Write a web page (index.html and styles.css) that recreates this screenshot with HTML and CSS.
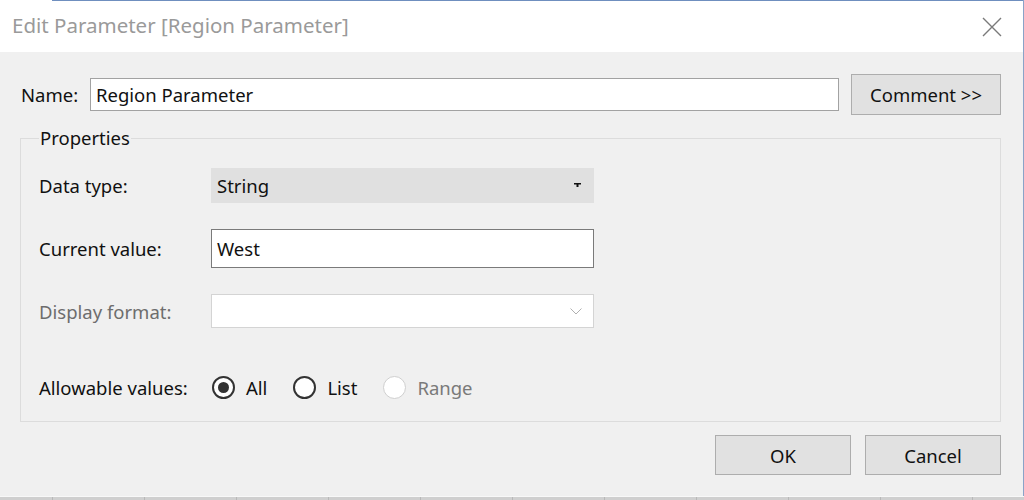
FILE: index.html
```html
<!DOCTYPE html>
<html>
<head>
<meta charset="utf-8">
<link rel="stylesheet" href="styles.css">
</head>
<body>
<div class="window">
  <div class="topline"></div>
  <div class="titlebar">
    <span class="title">Edit Parameter [Region Parameter]</span>
    <svg class="close" width="20" height="20" viewBox="0 0 20 20"><path d="M1 1 L19 19 M19 1 L1 19" stroke="#7a7a7a" stroke-width="1.4" fill="none"/></svg>
  </div>
  <div class="content">
    <div class="name-row">
      <span class="label name-label">Name:</span>
      <div class="input name-input">Region Parameter</div>
      <div class="btn comment-btn">Comment &gt;&gt;</div>
    </div>
    <fieldset class="props">
      <legend>Properties</legend>
      <div class="row row-type">
        <span class="label">Data type:</span>
        <div class="combo combo-type">
          <span>String</span>
          <svg width="7" height="5" viewBox="0 0 7 5"><path d="M0 0 H7 V1.5 H4.5 V4 H2.5 V1.5 H0 Z" fill="#111"/></svg>
        </div>
      </div>
      <div class="row row-value">
        <span class="label">Current value:</span>
        <div class="input value-input">West</div>
      </div>
      <div class="row row-format">
        <span class="label disabled">Display format:</span>
        <div class="combo combo-format">
          <span></span>
          <svg width="12" height="7" viewBox="0 0 12 7"><path d="M0.5 0.5 L6 6 L11.5 0.5" stroke="#b0b0b0" stroke-width="1" fill="none"/></svg>
        </div>
      </div>
      <div class="row row-allow">
        <span class="label">Allowable values:</span>
        <div class="radios">
          <span class="radio checked"></span><span class="rtext">All</span>
          <span class="radio"></span><span class="rtext">List</span>
          <span class="radio off"></span><span class="rtext disabled">Range</span>
        </div>
      </div>
    </fieldset>
    <div class="buttons">
      <div class="btn">OK</div>
      <div class="btn">Cancel</div>
    </div>
  </div>
</div>
<div class="strip">
  <span></span><span></span><span></span><span></span><span></span><span></span><span></span><span></span><span></span><span></span><span class="last"></span>
</div>
</body>
</html>
```

FILE: styles.css
```css
* { box-sizing: border-box; }
html, body { margin: 0; padding: 0; }
body {
  width: 1024px;
  height: 500px;
  overflow: hidden;
  background: #ffffff;
  font-family: "Noto Sans", "Open Sans", "Liberation Sans", sans-serif;
  font-size: 18.5px;
  color: #111;
}
.window {
  height: 496px;
  border-right: 1px solid #8aa3c8;
  display: flex;
  flex-direction: column;
}
.topline {
  height: 1px;
  margin-left: 52px;
  background: #6f8fbf;
}
.titlebar {
  height: 51px;
  background: #fff;
  display: flex;
  align-items: center;
  justify-content: space-between;
  padding: 0 21px 0 12px;
}
.title {
  color: #9a9a9a;
  font-size: 20.5px;
  margin-top: -3px;
}
.close { margin-top: 0; }
.content {
  flex: 1;
  background: #f0f0f0;
  padding: 22px 22px 0 20px;
}
.name-row {
  display: flex;
  align-items: center;
  height: 41px;
}
.name-label { width: 70px; padding-left: 1px; }
.input {
  background: #fff;
  border: 1px solid #a2a2a2;
  display: flex;
  align-items: center;
  padding-left: 5px;
}
.name-input { width: 749px; height: 33px; }
.btn {
  background: #e1e1e1;
  border: 1px solid #adadad;
  display: flex;
  align-items: center;
  justify-content: center;
}
.comment-btn { width: 150px; height: 41px; margin-left: 12px; }
.props {
  margin: 13px 0 0 0;
  border: 1px solid #dcdcdc;
  padding: 20px 0 22px 18px;
  min-width: 0;
}
.props legend {
  padding: 0 1px;
  margin-left: 0;
  line-height: 20px;
}
.row {
  display: flex;
  align-items: center;
}
.row .label { width: 172px; }
.row-type { height: 35px; }
.row-value { height: 39px; margin-top: 26px; }
.row-format { height: 34px; margin-top: 26px; }
.row-allow { height: 24px; margin-top: 47px; }
.combo {
  width: 383px;
  display: flex;
  align-items: center;
  justify-content: space-between;
  padding: 0 13px 0 6px;
}
.combo-type { height: 35px; background: #e0e0e0; }
.combo-format { height: 34px; background: #fff; border: 1px solid #d4d4d4; padding-right: 11px; }
.value-input { width: 383px; height: 39px; border-color: #7a7a7a; padding-left: 5px; }
.disabled { color: #6d6d6d; }
.rtext.disabled { color: #7a7a7a; }
.radios { display: flex; align-items: center; margin-left: 1px; }
.radio {
  width: 23px;
  height: 23px;
  border-radius: 50%;
  border: 2px solid #333;
  background: #fff;
  display: flex;
  align-items: center;
  justify-content: center;
}
.radio.checked::after {
  content: "";
  width: 11px;
  height: 11px;
  border-radius: 50%;
  background: #333;
}
.radio.off { border: 1px solid #cfcfcf; }
.rtext { margin: 0 26px 0 11px; }
.buttons {
  display: flex;
  justify-content: flex-end;
  gap: 14px;
  margin-top: 13px;
}
.buttons .btn { width: 136px; height: 40px; }
.strip {
  height: 4px;
  border-top: 1px solid #f8f8f8;
  background: #cfcfcf;
  display: flex;
  padding-left: 52px;
}
.strip span {
  width: 92px;
  flex: none;
  border-left: 1px solid #b8b8b8;
}
.strip span.last { flex: 1; width: auto; }
```
